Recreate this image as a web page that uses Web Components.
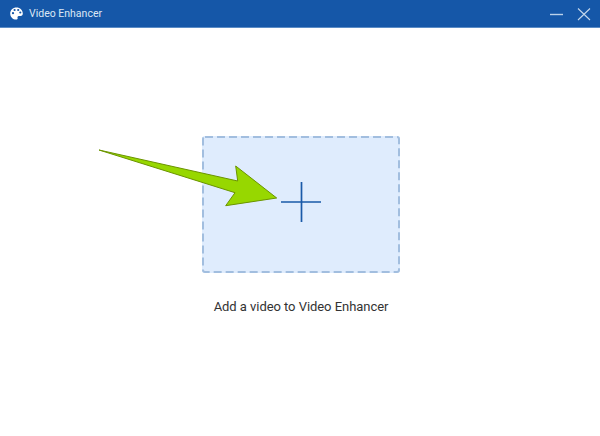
<!DOCTYPE html>
<html>
<head>
<meta charset="utf-8">
<title>Video Enhancer</title>
<style>
html, body { margin: 0; height: 100%; background: #fff; }
body { font-family: Roboto, "Open Sans", sans-serif; }
</style>
</head>
<body>
<enhancer-window></enhancer-window>

<template id="titlebar-template">
<style>
:host {
	display: flex;
	align-items: center;
	height: 27px;
	padding: 0 0 0 10px;
	background: #1557a8;
	border-bottom: 1px solid #5b8cc6;
	color: #dbe7f5;
	font-size: 10.5px;
}
#icon { width: 13px; height: 13px; margin-right: 6px; flex: none; }
#title { flex: 1; }
#controls { display: flex; align-items: center; }
.ctl { display: block; width: 14px; height: 14px; }
#min { margin-right: 14px; }
#close { margin-right: 9px; }
</style>
<svg id="icon" viewBox="0 0 13 13">
	<path fill="#fff" fill-rule="evenodd" d="M6.5 .4C2.9 .4 .2 3 .2 6.4c0 3.4 2.7 6.2 6 6.2 1.2 0 1.7-.8 1.4-1.6-.4-1 .1-2 1.2-2h1.7c1.6 0 2.3-1.2 2.3-2.4C12.8 3 10.100 .4 6.500 .4zM3 7.300a1.100 1.100 0 1 1 0-2.200 1.100 1.100 0 0 1 0 2.200zM4.600 4.100a1.100 1.100 0 1 1 0-2.200 1.100 1.100 0 0 1 0 2.200zM8.200 4.100a1.100 1.100 0 1 1 0-2.200 1.100 1.100 0 0 1 0 2.200zM10.300 6.600a1.100 1.100 0 1 1 0-2.200 1.100 1.100 0 0 1 0 2.200z"/>
</svg>
<span id="title"><slot></slot></span>
<div id="controls">
	<svg id="min" class="ctl" viewBox="0 0 14 14"><path d="M1 7.500H14" stroke="#bcd2ea" stroke-width="1.400"/></svg>
	<svg id="close" class="ctl" viewBox="0 0 14 14"><path d="M1 1.500L13 13M13 1.500L1 13" stroke="#c4d7ec" stroke-width="1.100" fill="none"/></svg>
</div>
</template>

<template id="dropzone-template">
<style>
:host {
	display: block;
	position: relative;
	width: 198px;
	height: 137px;
	background: #dfecfd;
	border-radius: 3px;
}
#edge {
	position: absolute;
	left: 0;
	top: 0;
	width: 198px;
	height: 137px;
}
#plus {
	position: absolute;
	left: 79px;
	top: 46px;
	width: 40px;
	height: 40px;
}
</style>
<svg id="edge" viewBox="0 0 198 137">
	<rect x="1" y="1" width="196" height="135" rx="2" fill="none" stroke="#a2bedf" stroke-width="2" stroke-dasharray="8 4"/>
</svg>
<svg id="plus" viewBox="0 0 40 40">
	<path d="M0 20H40M20.500 0V40" stroke="#1a5aa8" stroke-width="1.700" fill="none"/>
</svg>
</template>

<template id="window-template">
<style>
:host {
	display: flex;
	flex-direction: column;
	position: relative;
	width: 600px;
	height: 436px;
	overflow: hidden;
	background: #fff;
}
#body {
	display: flex;
	flex-direction: column;
	align-items: center;
	padding: 108px 0 0 2px;
}
#label {
	margin-top: 25px;
	font-size: 13px;
	line-height: 18px;
	letter-spacing: -.05px;
	color: #333;
}
#arrow {
	position: absolute;
	left: 0;
	top: 0;
	width: 600px;
	height: 436px;
	pointer-events: none;
}
</style>
<title-bar>Video Enhancer</title-bar>
<div id="body">
	<drop-zone></drop-zone>
	<div id="label">Add a video to Video Enhancer</div>
</div>
<svg id="arrow" viewBox="0 0 600 436">
	<path d="M99 150L237.700 181L235.700 166L276.700 198L225.700 205.700L235 192.700Z" fill="#97d700" stroke="#6b9400" stroke-width="1" stroke-linejoin="round"/>
</svg>
</template>

<script>
//Small helper so each element stamps out its own template
function stamp(el, id) {
	el.attachShadow({mode: "open"});
	el.shadowRoot.appendChild(document.getElementById(id).content.cloneNode(true));
}

class TitleBar extends HTMLElement {
	constructor() {
		super();
		stamp(this, "titlebar-template");
	}
}

class DropZone extends HTMLElement {
	constructor() {
		super();
		stamp(this, "dropzone-template");
	}
}

class EnhancerWindow extends HTMLElement {
	constructor() {
		super();
		stamp(this, "window-template");
	}
}

window.customElements.define("title-bar", TitleBar);
window.customElements.define("drop-zone", DropZone);
window.customElements.define("enhancer-window", EnhancerWindow);
</script>
</body>
</html>
